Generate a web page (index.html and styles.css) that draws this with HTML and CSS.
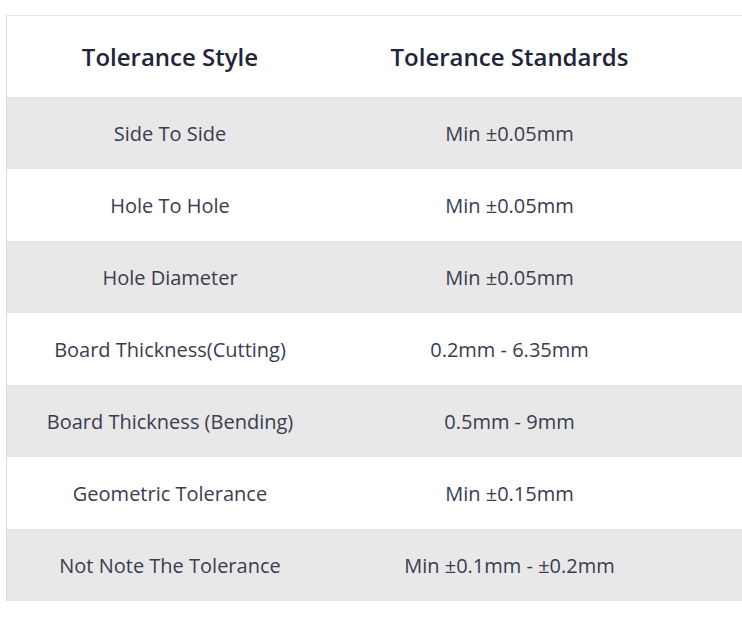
FILE: index.html
```html
<!DOCTYPE html>
<html>
<head>
<meta charset="utf-8">
<link rel="stylesheet" href="styles.css">
</head>
<body>
<div class="table">
  <div class="row head">
    <div class="cell c1">Tolerance Style</div>
    <div class="cell c2">Tolerance Standards</div>
  </div>
  <div class="row alt">
    <div class="cell c1">Side To Side</div>
    <div class="cell c2">Min ±0.05mm</div>
  </div>
  <div class="row">
    <div class="cell c1">Hole To Hole</div>
    <div class="cell c2">Min ±0.05mm</div>
  </div>
  <div class="row alt">
    <div class="cell c1">Hole Diameter</div>
    <div class="cell c2">Min ±0.05mm</div>
  </div>
  <div class="row">
    <div class="cell c1">Board Thickness(Cutting)</div>
    <div class="cell c2">0.2mm - 6.35mm</div>
  </div>
  <div class="row alt">
    <div class="cell c1">Board Thickness (Bending)</div>
    <div class="cell c2">0.5mm - 9mm</div>
  </div>
  <div class="row">
    <div class="cell c1">Geometric Tolerance</div>
    <div class="cell c2">Min ±0.15mm</div>
  </div>
  <div class="row alt">
    <div class="cell c1">Not Note The Tolerance</div>
    <div class="cell c2">Min ±0.1mm - ±0.2mm</div>
  </div>
</div>
</body>
</html>
```

FILE: styles.css
```css
html, body {
  margin: 0;
  padding: 0;
  background: #ffffff;
}
body {
  font-family: "Open Sans", "Noto Sans", sans-serif;
  color: #3a3c4f;
}
.table {
  margin: 15px 0 0 6px;
  border-top: 1px solid #e6e6e6;
  border-left: 1px solid #dcdcdc;
  display: flex;
  flex-direction: column;
}
.row {
  display: grid;
  grid-template-columns: 308px 1fr;
  height: 72px;
  align-items: center;
  font-size: 20px;
}
.row.alt {
  background: #e8e8e8;
}
.row.head {
  height: 81px;
  font-size: 24px;
  font-weight: 600;
  color: #22253a;
}
.cell {
  text-align: center;
}
.c1 {
  padding-left: 18px;
}
.c2 {
  padding-right: 38px;
}
```
